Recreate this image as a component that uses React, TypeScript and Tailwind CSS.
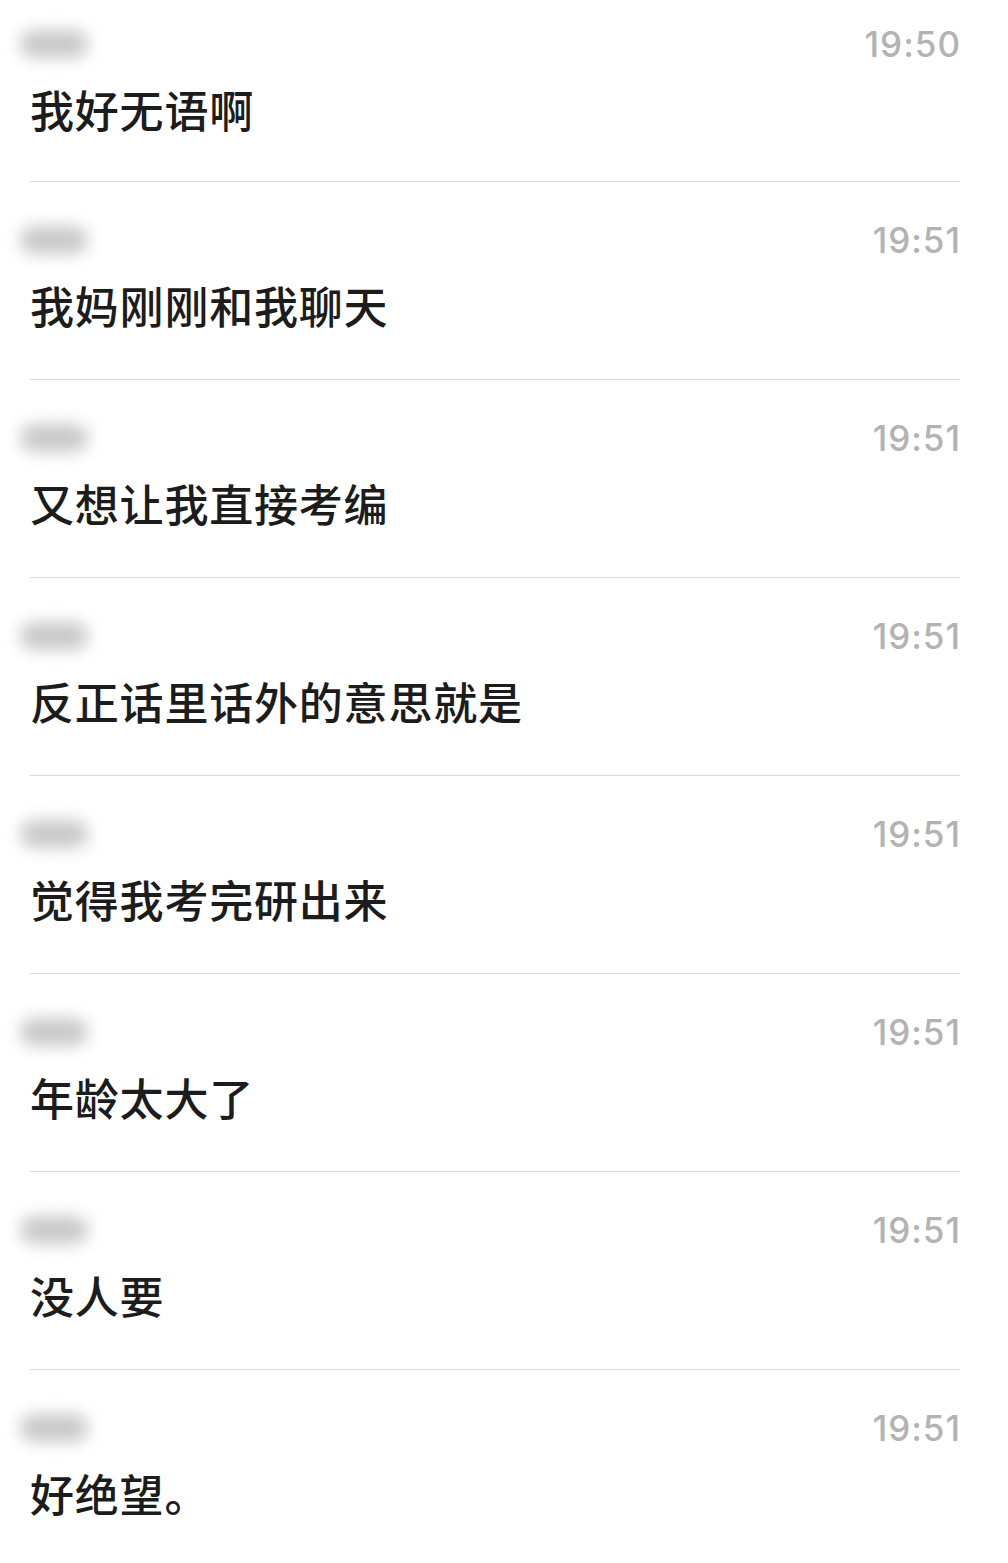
import React from "react";

const messages = [
  { id: 1, time: "19:50", text: "我好无语啊" },
  { id: 2, time: "19:51", text: "我妈刚刚和我聊天" },
  { id: 3, time: "19:51", text: "又想让我直接考编" },
  { id: 4, time: "19:51", text: "反正话里话外的意思就是" },
  { id: 5, time: "19:51", text: "觉得我考完研出来" },
  { id: 6, time: "19:51", text: "年龄太大了" },
  { id: 7, time: "19:51", text: "没人要" },
  { id: 8, time: "19:51", text: "好绝望。" },
];

const App = () => {
  return (
    <div className="bg-white w-[1008px] h-[1563px] overflow-hidden">
      <div className="pl-[30px] pr-[48px]">
        {messages.map((m, i) => (
          <div
            key={m.id}
            className={
              (i === 0 ? "pt-[24px] pb-[44px] " : "pt-[38px] pb-[46px] ") +
              (i < messages.length - 1 ? "border-b border-[#d9d9d9]" : "")
            }
          >
            <div className="flex items-center justify-between h-[40px]">
              <div className="-ml-[10px] w-[68px] h-[28px] rounded-full bg-[#c9c9c9] blur-[8px]" />
              <span className="-mr-[1px] text-[35px] leading-none font-medium tracking-[1px] text-[#b3b3b3] font-['Inter',sans-serif]">
                {m.time}
              </span>
            </div>
            <p className="mt-[17px] h-[56px] leading-[56px] text-[44px] font-medium tracking-[0.8px] text-[#1c1c1c] font-['Noto_Sans_CJK_SC',sans-serif]">
              {m.text}
            </p>
          </div>
        ))}
      </div>
    </div>
  );
};

export default App;
